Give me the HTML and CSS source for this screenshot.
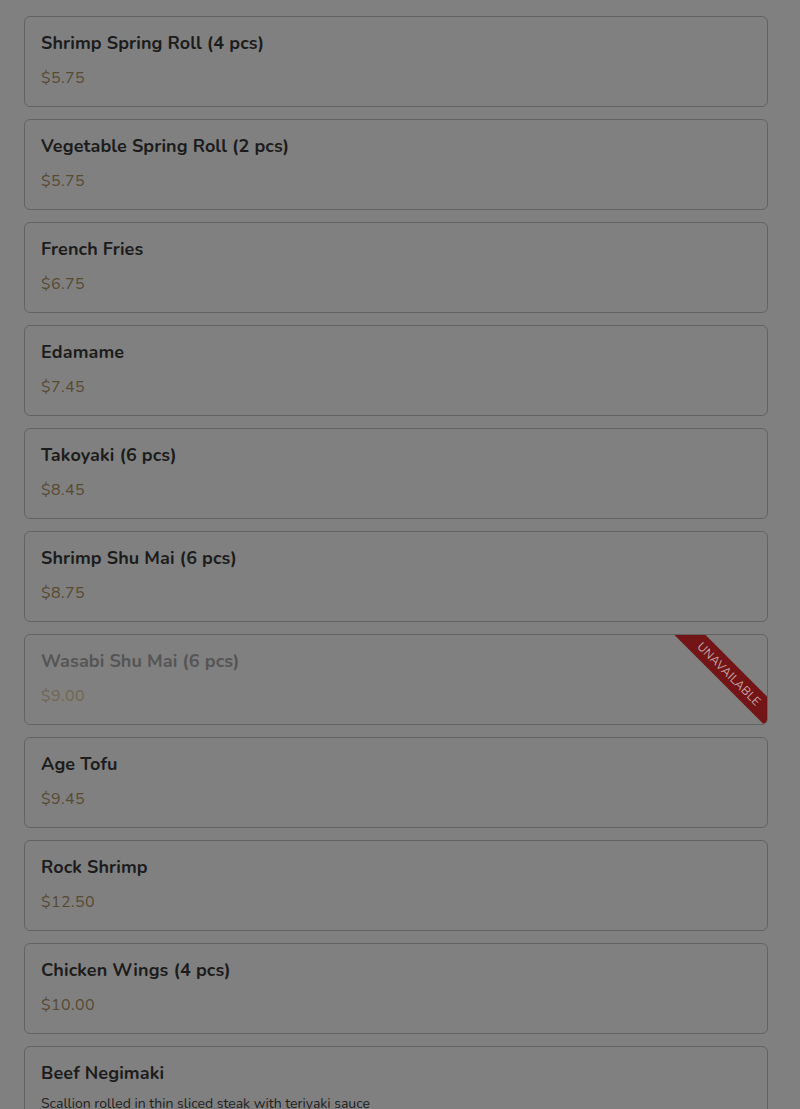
FILE: index.html
```html
<!DOCTYPE html>
<html lang="en">
<head>
<meta charset="utf-8">
<title>Menu</title>
<link rel="stylesheet" href="styles.css">
</head>
<body>
<main class="menu">
  <div class="item"><div class="name">Shrimp Spring Roll (4 pcs)</div><div class="price">$5.75</div></div>
  <div class="item"><div class="name">Vegetable Spring Roll (2 pcs)</div><div class="price">$5.75</div></div>
  <div class="item"><div class="name">French Fries</div><div class="price">$6.75</div></div>
  <div class="item"><div class="name">Edamame</div><div class="price">$7.45</div></div>
  <div class="item"><div class="name">Takoyaki (6 pcs)</div><div class="price">$8.45</div></div>
  <div class="item"><div class="name">Shrimp Shu Mai (6 pcs)</div><div class="price">$8.75</div></div>
  <div class="item unavailable"><div class="name">Wasabi Shu Mai (6 pcs)</div><div class="price">$9.00</div><div class="ribbon">Unavailable</div></div>
  <div class="item"><div class="name">Age Tofu</div><div class="price">$9.45</div></div>
  <div class="item"><div class="name">Rock Shrimp</div><div class="price">$12.50</div></div>
  <div class="item"><div class="name">Chicken Wings (4 pcs)</div><div class="price">$10.00</div></div>
  <div class="item"><div class="name">Beef Negimaki</div><div class="desc">Scallion rolled in thin sliced steak with teriyaki sauce</div><div class="price">$13.95</div></div>
</main>
</body>
</html>
```
FILE: styles.css
```css
html, body {
  margin: 0;
  background: #808080;
}
body {
  font-family: "Nunito", "Lato", "Open Sans", sans-serif;
  color: #1c1c1c;
  height: 1109px;
  overflow: hidden;
}
.menu {
  display: flex;
  flex-direction: column;
  gap: 12px;
  padding: 16px 32px 16px 24px;
}
.item {
  position: relative;
  overflow: hidden;
  border: 1px solid #636363;
  border-radius: 6px;
  padding: 16px;
  display: flex;
  flex-direction: column;
}
.name {
  font-size: 18px;
  font-weight: 700;
  line-height: 20px;
  letter-spacing: 0.1px;
}
.price {
  margin-top: 14px;
  font-size: 16px;
  line-height: 23px;
  color: #574a33;
  letter-spacing: 0.4px;
}
.desc {
  margin-top: 11px;
  font-size: 14px;
  line-height: 20px;
  color: #222;
}
.unavailable .name { color: #555; }
.unavailable .price { color: #6f6753; }
.ribbon {
  position: absolute;
  top: 28px;
  right: -42px;
  width: 160px;
  height: 22px;
  line-height: 22px;
  background: #731416;
  color: #c7a5a5;
  font-size: 12px;
  text-transform: uppercase;
  text-align: center;
  letter-spacing: 0.2px;
  transform: rotate(45deg);
}
```
